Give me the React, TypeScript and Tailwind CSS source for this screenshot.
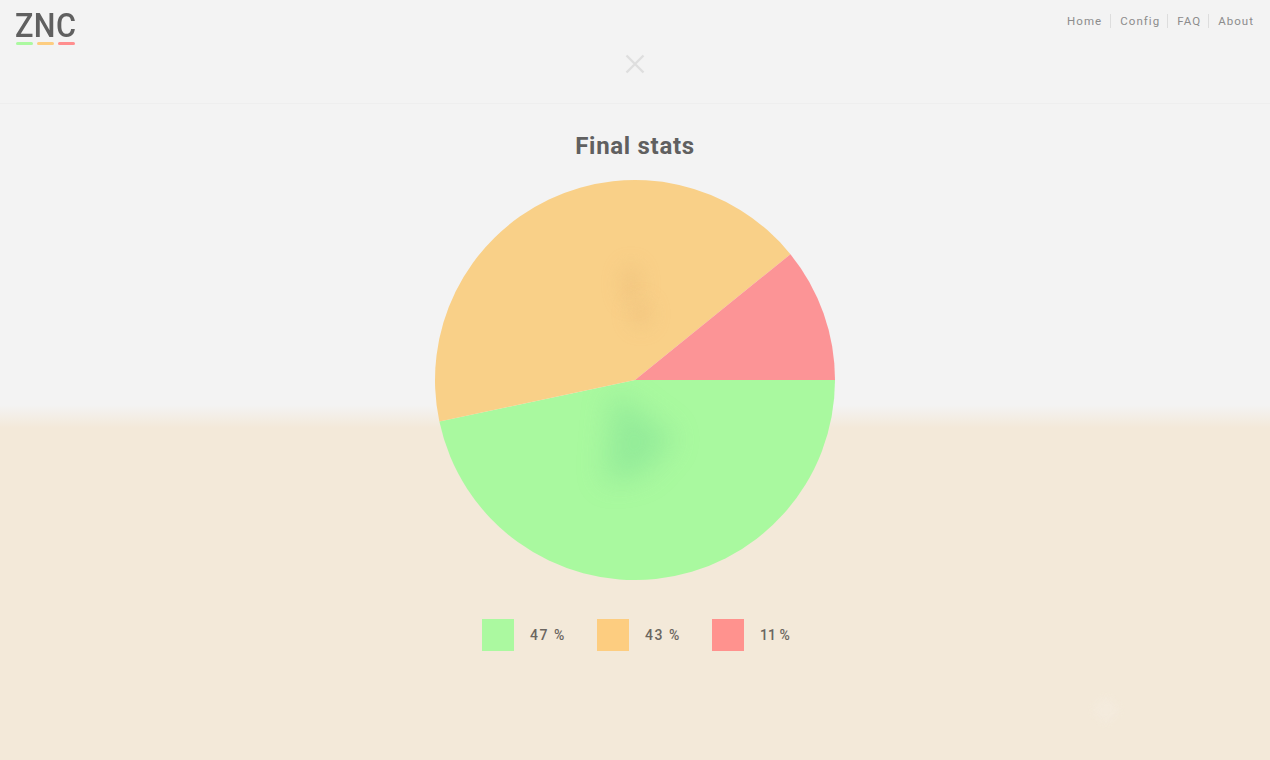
import React from "react";

const cx = 200;
const cy = 200;
const r = 200;
const pt = (deg: number) => {
  const a = (deg * Math.PI) / 180;
  return `${(cx + r * Math.cos(a)).toFixed(2)} ${(cy + r * Math.sin(a)).toFixed(2)}`;
};
const slice = (from: number, to: number) =>
  `M${cx} ${cy} L${pt(from)} A${r} ${r} 0 ${to - from > 180 ? 1 : 0} 1 ${pt(to)} Z`;

function Pie() {
  return (
    <svg width="400" height="400" viewBox="0 0 400 400" className="block">
      <defs>
        <filter id="b1" x="-100%" y="-100%" width="300%" height="300%">
          <feGaussianBlur stdDeviation="14" />
        </filter>
        <filter id="b2" x="-100%" y="-100%" width="300%" height="300%">
          <feGaussianBlur stdDeviation="9" />
        </filter>
        <clipPath id="g">
          <path d={slice(0, 168)} />
        </clipPath>
        <clipPath id="o">
          <path d={slice(168, 321)} />
        </clipPath>
      </defs>
      <path d={slice(0, 168)} fill="#a9f99f" />
      <path d={slice(168, 321)} fill="#f9d088" />
      <path d={slice(321, 360)} fill="#fc9496" />
      <g clipPath="url(#g)">
        <path d="M178 212 L240 258 L208 294 L170 302 Z" fill="#8fe898" opacity="0.8" filter="url(#b1)" />
      </g>
      <g clipPath="url(#o)">
        <ellipse cx="196" cy="104" rx="11" ry="20" fill="#efc27e" opacity="0.6" filter="url(#b2)" />
        <ellipse cx="206" cy="134" rx="11" ry="14" fill="#efc27e" opacity="0.6" filter="url(#b2)" />
      </g>
    </svg>
  );
}

const nav = ["Home", "Config", "FAQ", "About"];
const legend = [
  { c: "bg-[#abf9a0]", t: "47 %", w: "w-[34px] tracking-[1.5px]" },
  { c: "bg-[#fdcd80]", t: "43 %", w: "w-[34px] tracking-[1.5px]" },
  { c: "bg-[#ff928e]", t: "11 %", w: "w-[28px] tracking-[0px]" },
];

export default function App() {
  return (
    <div className="relative h-[760px] w-full overflow-hidden bg-[linear-gradient(to_bottom,#f3f3f3_0,#f3f3f3_405px,#f3e9d9_428px,#f3e9d9_100%)] font-['Roboto',sans-serif]">
      <header className="relative h-[104px] border-b border-[#eeeeee]">
        <div className="flex items-start justify-between">
          <div className="ml-[15px] mt-[7px] w-[61px]">
            <div className="h-[35px] origin-left scale-x-[0.9] whitespace-nowrap text-[34px] font-medium leading-[37px] tracking-[0.4px] text-[#606060]">
              ZNC
            </div>
            <div className="ml-[1px] flex gap-[4px]">
              <span className="h-[3px] w-[17px] rounded-full bg-[#abf9a0]" />
              <span className="h-[3px] w-[17px] rounded-full bg-[#fdcd80]" />
              <span className="h-[3px] w-[17px] rounded-full bg-[#ff8e8e]" />
            </div>
          </div>
          <nav className="mr-[16px] mt-[14px] flex items-center text-[11.5px] leading-[14px] tracking-[1.05px] text-[#8c8c8c]">
            {nav.map((n, i) => (
              <span
                key={n}
                className={i === 0 ? "pr-[8px]" : "border-l border-[#dddddd] pl-[9px] pr-[7px] last:pr-0"}
              >
                {n}
              </span>
            ))}
          </nav>
        </div>
        <button className="absolute left-[625px] top-[54px] block h-[20px] w-[20px]" aria-label="Close">
          <svg width="20" height="20" viewBox="0 0 20 20" className="block">
            <path d="M1.5 1.5 L18.5 18.5 M18.5 1.5 L1.5 18.5" stroke="#dedede" strokeWidth="2.4" fill="none" />
          </svg>
        </button>
      </header>
      <main className="flex flex-col items-center">
        <h1 className="mt-[26px] h-[32px] text-[24px] font-bold leading-[32px] tracking-[0.7px] text-[#606060]">
          Final stats
        </h1>
        <div className="mt-[18px]">
          <Pie />
        </div>
        <div className="mt-[39px] flex items-center gap-[33px]">
          {legend.map((l) => (
            <div key={l.t} className="flex items-center gap-[16px]">
              <span className={`block h-[32px] w-[32px] ${l.c}`} />
              <span className={`whitespace-nowrap text-[14px] font-medium text-[#6b6660] ${l.w}`}>{l.t}</span>
            </div>
          ))}
        </div>
      </main>
      <div className="absolute left-[1096px] top-[700px] h-[20px] w-[20px] rotate-45 rounded-[4px] bg-[#f4ebdd] blur-[3px]" />
    </div>
  );
}
